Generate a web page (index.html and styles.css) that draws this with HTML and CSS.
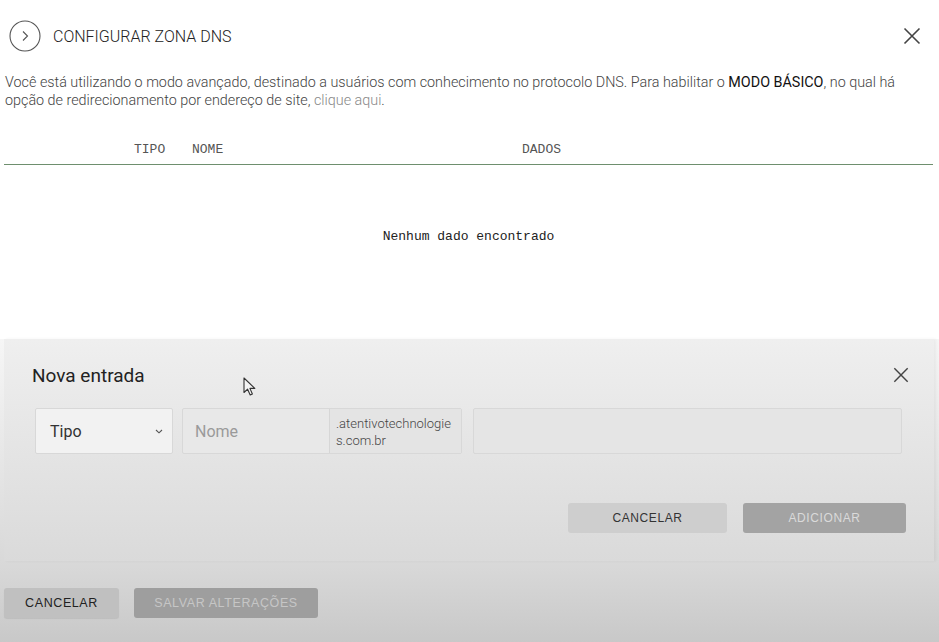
FILE: index.html
```html
<!DOCTYPE html>
<html lang="pt-BR">
<head>
<meta charset="utf-8">
<title>Configurar zona DNS</title>
<link rel="stylesheet" href="styles.css">
</head>
<body>
<div class="page">
  <header class="top">
    <span class="back-icon">
      <svg width="32" height="32" viewBox="0 0 32 32"><circle cx="16" cy="16" r="15" fill="none" stroke="#555" stroke-width="1.1"/><path d="M14 11.5 L18.5 16 L14 20.5" fill="none" stroke="#555" stroke-width="1.1"/></svg>
    </span>
    <h1 class="title">CONFIGURAR ZONA DNS</h1>
    <span class="close-icon">
      <svg width="18" height="18" viewBox="0 0 18 18"><path d="M1.5 1.5 L16.5 16.5 M16.5 1.5 L1.5 16.5" stroke="#444" stroke-width="1.6" fill="none"/></svg>
    </span>
  </header>

  <p class="intro">Você está utilizando o modo avançado, destinado a usuários com conhecimento no protocolo DNS. Para habilitar o <strong>MODO BÁSICO</strong>, no qual há opção de redirecionamento por endereço de site, <a class="link">clique aqui</a>.</p>

  <div class="table">
    <div class="thead">
      <span></span>
      <span>TIPO</span>
      <span>NOME</span>
      <span>DADOS</span>
    </div>
    <div class="empty">Nenhum dado encontrado</div>
  </div>
</div>

<div class="shade">
  <section class="panel">
    <div class="panel-head">
      <h2 class="panel-title">Nova entrada</h2>
      <span class="close-icon small">
        <svg width="18" height="18" viewBox="0 0 18 18"><path d="M1.5 1.5 L16.5 16.5 M16.5 1.5 L1.5 16.5" stroke="#444" stroke-width="1.6" fill="none"/></svg>
      </span>
    </div>
    <div class="row">
      <div class="select">
        <span>Tipo</span>
        <svg width="8" height="5" viewBox="0 0 8 5"><path d="M1 1 L4 3.8 L7 1" stroke="#555" stroke-width="1.1" fill="none"/></svg>
      </div>
      <div class="name-group">
        <span class="name-input">Nome</span>
        <span class="suffix">.atentivotechnologies.com.br</span>
      </div>
      <div class="data-input"></div>
    </div>
    <div class="actions">
      <button class="btn btn-light">CANCELAR</button>
      <button class="btn btn-dark">ADICIONAR</button>
    </div>
    <svg class="cursor" width="14" height="20" viewBox="0 0 14 20"><path d="M1 1 L1 15.5 L4.6 12.2 L7.2 18 L9.4 17 L6.9 11.4 L11.8 11.4 Z" fill="#f4f4f4" stroke="#333" stroke-width="1.1" stroke-linejoin="round"/></svg>
  </section>
  <div class="footer">
    <button class="btn btn-foot-light">CANCELAR</button>
    <button class="btn btn-foot-dark">SALVAR ALTERAÇÕES</button>
  </div>
</div>
</body>
</html>
```
FILE: styles.css
```css
* { box-sizing: border-box; }
html, body { margin: 0; padding: 0; }
body {
  background: #fff;
  font-family: Roboto, "Liberation Sans", Arial, sans-serif;
  color: #333;
  width: 939px;
  height: 642px;
  overflow: hidden;
}
.page { padding: 0 6px 0 4px; }

.top {
  display: flex;
  align-items: center;
  height: 30px;
  margin-top: 21px;
}
.back-icon { width: 32px; height: 32px; margin-left: 5px; display: flex; }
.title {
  margin: 0 0 0 12px;
  font-size: 16px;
  font-weight: 300;
  color: #222;
  flex: 1;
}
.close-icon { display: flex; width: 18px; height: 18px; margin-right: 12px; }

.intro {
  margin: 23px 0 0 1px;
  font-size: 14.35px;
  font-weight: 300;
  line-height: 18px;
  color: #444;
  width: 928px;
}
.intro strong { font-weight: 400; color: #111; }
.link { color: #888; }

.table { margin-top: 23px; }
.thead {
  display: grid;
  grid-template-columns: 130px 58px 330px 1fr;
  height: 32px;
  padding-top: 1px;
  align-items: center;
  border-bottom: 1px solid #6e8f6e;
  font-family: "Liberation Mono", "DejaVu Sans Mono", monospace;
  font-size: 13px;
  color: #555;
}
.empty {
  text-align: center;
  font-family: "Liberation Mono", "DejaVu Sans Mono", monospace;
  font-size: 13px;
  line-height: 18px;
  color: #222;
  padding: 63px 0 93px;
}

.shade {
  background: linear-gradient(to bottom, #f6f6f6 0%, #d8d8d8 75%, #c8c8c8 100%);
  padding: 0 5px 0 4px;
  height: 304px;
}
.panel {
  position: relative;
  background: linear-gradient(to bottom, #efefef 0%, #dadada 100%);
  box-shadow: 2px 0 3px rgba(0,0,0,0.05);
  padding: 24px 25px 28px 28px;
}
.panel-head {
  display: flex;
  align-items: center;
  justify-content: space-between;
  height: 24px;
}
.panel-title {
  margin: 0;
  font-size: 19px;
  font-weight: 400;
  color: #222;
}
.close-icon.small { margin-right: 0; width: 16px; height: 16px; }
.close-icon.small svg { width: 16px; height: 16px; }

.row {
  display: flex;
  margin: 21px 7px 0 3px;
  height: 46px;
  gap: 9px;
}
.select {
  width: 138px;
  flex: none;
  background: #f2f2f2;
  border: 1px solid #d8d8d8;
  border-radius: 2px;
  display: flex;
  align-items: center;
  justify-content: space-between;
  padding: 0 9px 0 14px;
  font-size: 16px;
  color: #333;
}
.name-group {
  width: 280px;
  flex: none;
  display: flex;
  border: 1px solid #d8d8d8;
  border-radius: 2px;
  background: #e8e8e8;
}
.name-input {
  width: 146px;
  display: flex;
  align-items: center;
  padding-left: 12px;
  font-size: 16px;
  color: #9a9a9a;
}
.suffix {
  flex: 1;
  border-left: 1px solid #d6d6d6;
  background: #e4e4e4;
  font-size: 13px;
  font-weight: 300;
  line-height: 17px;
  color: #444;
  padding: 6px 8px 0 6px;
  word-break: break-all;
}
.data-input {
  flex: 1;
  margin-left: 2px;
  background: #e5e5e5;
  border: 1px solid #d8d8d8;
  border-radius: 2px;
}

.actions {
  display: flex;
  justify-content: flex-end;
  gap: 16px;
  margin-top: 49px;
  padding-right: 3px;
}
.btn {
  height: 30px;
  border: none;
  border-radius: 3px;
  font-family: "Liberation Sans", Arial, sans-serif;
  font-size: 12px;
  letter-spacing: 0.6px;
  cursor: default;
}
.btn-light { width: 159px; background: #cecece; color: #333; }
.btn-dark { width: 163px; background: #a3a3a3; color: #dadada; }
.cursor { position: absolute; left: 239px; top: 38px; }

.footer {
  display: flex;
  gap: 15px;
  padding-top: 27px;
}
.btn-foot-light { width: 115px; background: #c0c0c0; color: #222; font-size: 12.5px; box-shadow: 0 1px 1px rgba(0,0,0,0.08); }
.btn-foot-dark { width: 184px; background: #9e9e9e; color: #c6c6c6; font-size: 12.5px; }
```
